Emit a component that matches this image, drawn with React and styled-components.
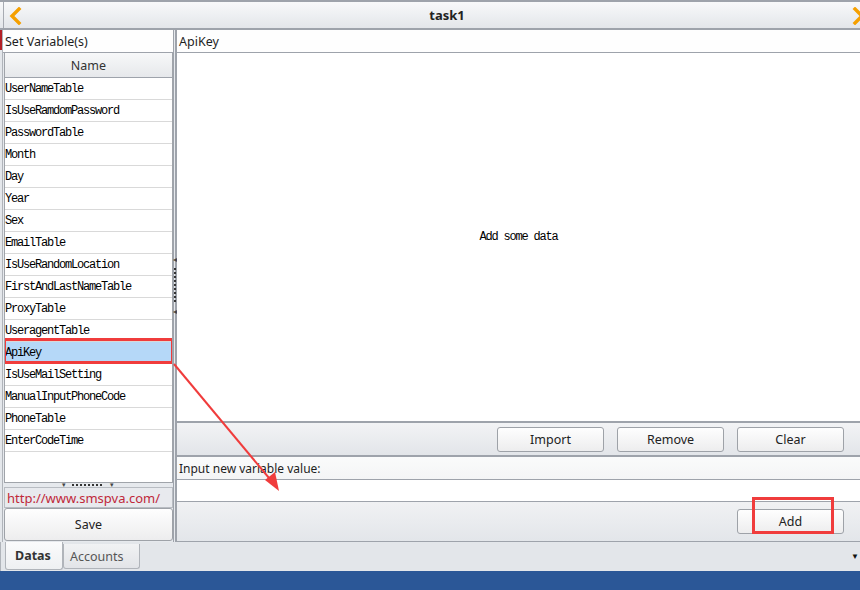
import styled, { createGlobalStyle } from "styled-components";

const GlobalStyle = createGlobalStyle`
  html, body {
    margin: 0;
    padding: 0;
    background: #e4e7eb;
  }
  * {
    box-sizing: border-box;
  }
`;

const variables = [
  "UserNameTable",
  "IsUseRamdomPassword",
  "PasswordTable",
  "Month",
  "Day",
  "Year",
  "Sex",
  "EmailTable",
  "IsUseRandomLocation",
  "FirstAndLastNameTable",
  "ProxyTable",
  "UseragentTable",
  "ApiKey",
  "IsUseMailSetting",
  "ManualInputPhoneCode",
  "PhoneTable",
  "EnterCodeTime",
];

const Chevron = ({ dir }) => (
  <svg width="14" height="18" viewBox="0 0 14 18">
    <path
      d={dir === "left" ? "M11 2 L4 9 L11 16" : "M3 2 L10 9 L3 16"}
      fill="none"
      stroke="#f5a000"
      strokeWidth="3.4"
      strokeLinecap="square"
    />
  </svg>
);

const App = () => {
  return (
    <Window>
      <GlobalStyle />
      <TopBar>
        <EdgeStrip />
        <NavButton>
          <Chevron dir="left" />
        </NavButton>
        <Title>task1</Title>
        <NavButton $right>
          <Chevron dir="right" />
        </NavButton>
      </TopBar>

      <Body>
        <Edge>
          <EdgeMark />
        </Edge>

        <LeftPanel>
          <PanelTitle>Set Variable(s)</PanelTitle>
          <ListBox>
            <ListHeader>Name</ListHeader>
            {variables.map((name) => (
              <Row key={name} $selected={name === "ApiKey"}>
                {name}
                {name === "ApiKey" && <RowMark />}
              </Row>
            ))}
          </ListBox>
          <HSplitter>
            <Grip>▾</Grip>
            <Dots />
            <Grip>▾</Grip>
          </HSplitter>
          <UrlBox>http://www.smspva.com/</UrlBox>
          <SaveButton>Save</SaveButton>
        </LeftPanel>

        <VSplitter>
          <VGrip>◂</VGrip>
          <VDots />
          <VGrip>◂</VGrip>
        </VSplitter>

        <RightPanel>
          <PanelTitle>ApiKey</PanelTitle>
          <DataArea>Add some data</DataArea>
          <ButtonBar>
            <Button>Import</Button>
            <Button>Remove</Button>
            <Button>Clear</Button>
          </ButtonBar>
          <InputLabel>Input new variable value:</InputLabel>
          <ValueInput />
          <AddBar>
            <AddWrap>
              <Button>Add</Button>
              <AddMark />
            </AddWrap>
          </AddBar>
        </RightPanel>
      </Body>

      <TabBar>
        <Tab $active>Datas</Tab>
        <Tab>Accounts</Tab>
        <TabSpacer />
        <TabMenu>▼</TabMenu>
      </TabBar>
      <StatusBar />

      <Annotation width="860" height="590" viewBox="0 0 860 590">
        <line x1="174" y1="364" x2="274" y2="484" stroke="#f03c3c" strokeWidth="2" />
        <polygon points="279,491 265,480 275,472" fill="#f03c3c" />
      </Annotation>
    </Window>
  );
};

const uiFont = `"Noto Sans", "Open Sans", Arial, sans-serif`;

const Window = styled.div`
  position: relative;
  width: 860px;
  height: 590px;
  display: flex;
  flex-direction: column;
  overflow: hidden;
  font-family: ${uiFont};
  font-size: 12px;
  color: #1e1e1e;
  background: #e4e7eb;
`;

const TopBar = styled.div`
  height: 30px;
  flex: none;
  display: flex;
  align-items: center;
  border-top: 2px solid #9ea3ab;
  border-bottom: 2px solid #9ea3ab;
  background: linear-gradient(#f8f9fa, #e3e6ea);
`;

const EdgeStrip = styled.div`
  width: 4px;
  align-self: stretch;
  border-right: 1px solid #a7abb2;
`;

const NavButton = styled.div`
  width: ${(p) => (p.$right ? "16px" : "22px")};
  display: flex;
  justify-content: ${(p) => (p.$right ? "flex-end" : "center")};
  margin-right: ${(p) => (p.$right ? "-6px" : "0")};
  padding-top: 1px;
`;

const Title = styled.div`
  flex: 1;
  text-align: center;
  font-weight: bold;
  font-size: 13px;
  color: #222;
  padding-left: 18px;
`;

const Body = styled.div`
  flex: 1;
  display: flex;
  min-height: 0;
`;

const Edge = styled.div`
  width: 3px;
  flex: none;
  border-right: 1px solid #b0b4ba;
`;

const EdgeMark = styled.div`
  height: 20px;
  width: 2px;
  background: #b32025;
`;

const LeftPanel = styled.div`
  width: 170px;
  flex: none;
  display: flex;
  flex-direction: column;
  background: #e6e9ed;
`;

const PanelTitle = styled.div`
  height: 23px;
  flex: none;
  display: flex;
  align-items: center;
  padding-left: 2px;
  font-size: 12.5px;
  background: #fefefe;
  border-bottom: 1px solid #9ea3ab;
`;

const ListBox = styled.div`
  flex: 1;
  margin: 0 0 0 1px;
  background: #fff;
  border-left: 1px solid #a0a4aa;
  border-right: 1px solid #a0a4aa;
  border-bottom: 1px solid #a0a4aa;
  overflow: hidden;
`;

const ListHeader = styled.div`
  height: 25px;
  display: flex;
  align-items: center;
  justify-content: center;
  font-size: 12.5px;
  color: #333;
  background: linear-gradient(#f7f8f9, #e6e8eb);
  border-bottom: 1px solid #9ea3ab;
`;

const Row = styled.div`
  position: relative;
  height: 22px;
  display: flex;
  align-items: center;
  padding-left: 0;
  font-family: "Liberation Mono", "DejaVu Sans Mono", monospace;
  font-size: 12px;
  letter-spacing: -1.2px;
  color: #000;
  background: ${(p) => (p.$selected ? "#b5d8f8" : "#fff")};
  border-bottom: 1px solid #d9d9d9;
`;

const RowMark = styled.span`
  position: absolute;
  left: -2px;
  right: -2px;
  top: -4px;
  bottom: -1px;
  border: 3px solid #f03c3c;
`;

const HSplitter = styled.div`
  height: 4px;
  flex: none;
  display: flex;
  justify-content: center;
  align-items: center;
  gap: 6px;
`;

const Grip = styled.span`
  font-size: 7px;
  line-height: 4px;
  color: #444;
`;

const Dots = styled.span`
  width: 32px;
  height: 2px;
  background: repeating-linear-gradient(90deg, #333 0 2px, transparent 2px 4px);
`;

const UrlBox = styled.div`
  height: 21px;
  flex: none;
  display: flex;
  align-items: center;
  padding-left: 2px;
  margin-left: 1px;
  font-size: 13px;
  color: #c0283a;
  background: #e8eaee;
  border: 1px solid #b8bcc2;
`;

const Button = styled.div`
  width: 107px;
  height: 25px;
  display: flex;
  align-items: center;
  justify-content: center;
  font-size: 12.5px;
  color: #222;
  background: linear-gradient(#fefefe, #ededee);
  border: 1px solid #9ea2a8;
  border-radius: 3px;
`;

const SaveButton = styled(Button)`
  width: auto;
  height: 33px;
  margin: 0 0 1px 1px;
  border-radius: 3px;
`;

const VSplitter = styled.div`
  width: 4px;
  flex: none;
  display: flex;
  flex-direction: column;
  align-items: center;
  justify-content: center;
  gap: 5px;
  padding-bottom: 2px;
  border-left: 1px solid #9ea3ab;
  border-right: 2px solid #9ea3ab;
  background: #e6e9ed;
`;

const VGrip = styled.span`
  font-size: 8px;
  line-height: 8px;
  color: #444;
  margin-left: 1px;
`;

const VDots = styled.span`
  width: 2px;
  height: 34px;
  background: repeating-linear-gradient(#333 0 2px, transparent 2px 4px);
`;

const RightPanel = styled.div`
  flex: 1;
  display: flex;
  flex-direction: column;
  background: #e6e9ed;
`;

const DataArea = styled.div`
  flex: 1;
  display: flex;
  align-items: center;
  justify-content: center;
  padding: 0 0 1px 0;
  font-family: "Liberation Mono", "DejaVu Sans Mono", monospace;
  font-size: 12px;
  letter-spacing: -1.2px;
  color: #000;
  background: #fff;
  border-bottom: 2px solid #9ea3ab;
`;

const ButtonBar = styled.div`
  height: 34px;
  flex: none;
  display: flex;
  align-items: center;
  justify-content: flex-end;
  gap: 13px;
  padding-right: 16px;
  background: linear-gradient(#f2f3f5, #e2e5e9);
  border-bottom: 2px solid #9ea3ab;
`;

const InputLabel = styled.div`
  height: 23px;
  flex: none;
  display: flex;
  align-items: center;
  padding-left: 2px;
  font-size: 12px;
  background: linear-gradient(#fafbfb, #f4f5f6);
  border-bottom: 1px solid #9ea3ab;
`;

const ValueInput = styled.div`
  height: 22px;
  flex: none;
  background: #fff;
  border-bottom: 1px solid #9ea3ab;
`;

const AddBar = styled.div`
  height: 40px;
  flex: none;
  display: flex;
  justify-content: flex-end;
  padding: 7px 16px 0 0;
  background: linear-gradient(#f0f1f3, #e3e6ea);
  border-bottom: 1px solid #9ea3ab;
`;

const AddWrap = styled.div`
  position: relative;
  height: 25px;
`;

const AddMark = styled.span`
  position: absolute;
  left: 15px;
  top: -12px;
  width: 82px;
  height: 37px;
  border: 3px solid #f03c3c;
`;

const TabBar = styled.div`
  height: 29px;
  flex: none;
  display: flex;
  align-items: flex-start;
  padding-left: 4px;
  background: #e3e6ea;
  border-left: 1px solid #b0b4ba;
`;

const Tab = styled.div`
  height: ${(p) => (p.$active ? "28px" : "25px")};
  margin-top: ${(p) => (p.$active ? "0" : "2px")};
  padding: 0 ${(p) => (p.$active ? "9px" : "6px")};
  width: ${(p) => (p.$active ? "58px" : "77px")};
  display: flex;
  align-items: center;
  font-size: 12.5px;
  font-weight: ${(p) => (p.$active ? "bold" : "normal")};
  color: ${(p) => (p.$active ? "#333" : "#555")};
  background: ${(p) =>
    p.$active ? "linear-gradient(#fbfbfc, #eef0f2)" : "linear-gradient(#f1f2f4, #e2e4e8)"};
  border: 1px solid #b0b4ba;
  border-top: none;
  border-radius: 0 0 3px 3px;
`;

const TabSpacer = styled.div`
  flex: 1;
`;

const TabMenu = styled.div`
  font-size: 8px;
  line-height: 8px;
  color: #111;
  margin: 10px 1px 0 0;
`;

const StatusBar = styled.div`
  height: 19px;
  flex: none;
  background: #2b5797;
`;

const Annotation = styled.svg`
  position: absolute;
  left: 0;
  top: 0;
  pointer-events: none;
`;

export default App;
